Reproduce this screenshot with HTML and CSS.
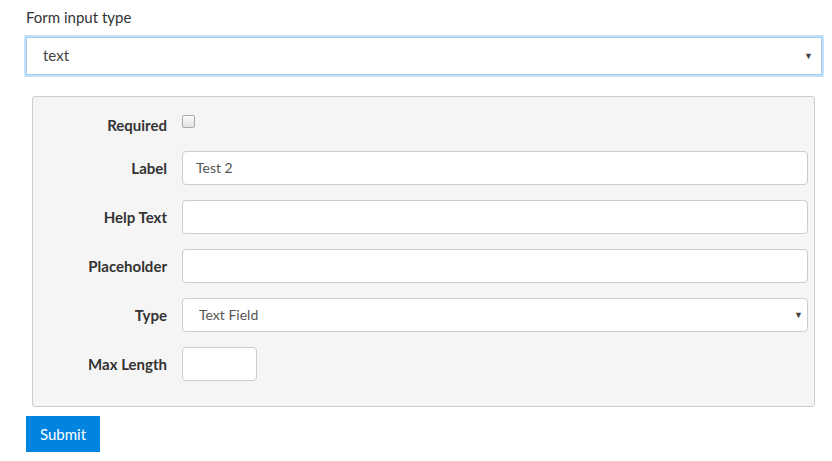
FILE: index.html
```html
<!DOCTYPE html>
<html>
<head>
<meta charset="utf-8">
<link rel="stylesheet" href="styles.css">
</head>
<body>
<div class="page">
  <label class="top-label">Form input type</label>
  <div class="select top-select focused"><span>text</span><span class="caret">▼</span></div>
  <div class="panel">
    <div class="row row-check">
      <div class="lbl">Required</div>
      <div class="field"><span class="checkbox"></span></div>
    </div>
    <div class="row">
      <div class="lbl">Label</div>
      <div class="field"><div class="input">Test 2</div></div>
    </div>
    <div class="row">
      <div class="lbl">Help Text</div>
      <div class="field"><div class="input"></div></div>
    </div>
    <div class="row">
      <div class="lbl">Placeholder</div>
      <div class="field"><div class="input"></div></div>
    </div>
    <div class="row">
      <div class="lbl">Type</div>
      <div class="field"><div class="input select"><span>Text Field</span><span class="caret">▼</span></div></div>
    </div>
    <div class="row">
      <div class="lbl">Max Length</div>
      <div class="field"><div class="input short"></div></div>
    </div>
  </div>
  <button class="submit">Submit</button>
</div>
</body>
</html>
```
FILE: styles.css
```css
html, body { margin: 0; padding: 0; background: #fff; }
body { font-family: Lato, "Open Sans", sans-serif; font-size: 14px; color: #333; }
.page { padding: 7px 10px 0 26px; width: 796px; }
.top-label { display: block; font-size: 15px; line-height: 20px; color: #333; margin-bottom: 10px; }
.select { display: flex; align-items: center; justify-content: space-between; box-sizing: border-box; }
.top-select { height: 38px; border: 1px solid #9ecaed; box-shadow: 0 0 0 2px #c6e1f9; padding: 0 8px 2px 16px; background: #fff; font-size: 15px; color: #444; }
.caret { font-size: 9px; color: #444; }
.panel { margin: 21px 7px 0 6px; background: #f5f5f5; border: 1px solid #ccc; border-radius: 3px; padding: 16px 6px 25px 0; }
.row { display: flex; align-items: center; margin-bottom: 15px; }
.row:last-child { margin-bottom: 0; }
.row-check { margin-bottom: 14px; height: 24px; }
.lbl { width: 134px; text-align: right; font-weight: bold; font-size: 15px; color: #333; padding-right: 15px; }
.field { flex: 1; display: flex; align-items: center; }
.checkbox { display: block; width: 11px; height: 11px; border: 1px solid #a9a9a9; border-radius: 2px; background: linear-gradient(#fafafa, #e3e3e3); margin-top: -8px; }
.input { box-sizing: border-box; height: 34px; width: 100%; background: #fff; border: 1px solid #ccc; border-radius: 4px; padding: 0 12px 1px 13px; display: flex; align-items: center; font-size: 14px; color: #555; }
.input.select { padding-left: 16px; padding-right: 4px; justify-content: space-between; }
.input.short { width: 75px; }
.submit { margin-top: 9px; background: #0183e0; color: #fff; border: none; height: 36px; width: 74px; font-family: inherit; font-size: 15px; padding: 0; }
```
